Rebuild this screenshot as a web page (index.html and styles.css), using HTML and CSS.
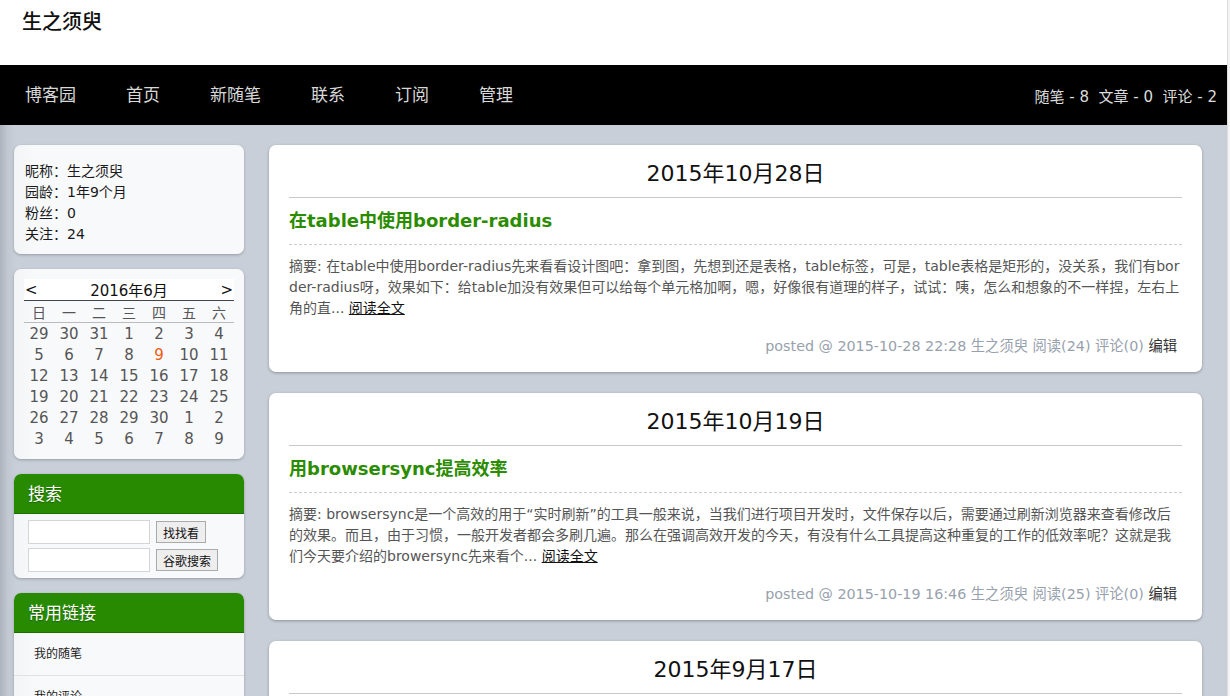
FILE: index.html
```html
<!DOCTYPE html>
<html lang="zh">
<head>
<meta charset="utf-8">
<title>生之须臾 - 博客园</title>
<link rel="stylesheet" href="styles.css">
</head>
<body>
<div class="page">
  <header class="header">
    <h1 class="site-title">生之须臾</h1>
  </header>
  <nav class="nav">
    <ul class="nav-list">
      <li><a href="#">博客园</a></li>
      <li><a href="#">首页</a></li>
      <li><a href="#">新随笔</a></li>
      <li><a href="#">联系</a></li>
      <li><a href="#">订阅</a></li>
      <li><a href="#">管理</a></li>
    </ul>
    <div class="stats">随笔 - 8&nbsp;&nbsp;文章 - 0&nbsp;&nbsp;评论 - 2</div>
  </nav>
  <div class="content">
    <aside class="sidebar">
      <section class="card profile">
        <div>昵称：生之须臾</div>
        <div>园龄：1年9个月</div>
        <div>粉丝：0</div>
        <div>关注：24</div>
      </section>
      <section class="card calendar">
        <table class="cal">
          <thead>
            <tr class="cal-title"><th>&lt;</th><th colspan="5">2016年6月</th><th class="next">&gt;</th></tr>
            <tr class="cal-week"><th>日</th><th>一</th><th>二</th><th>三</th><th>四</th><th>五</th><th>六</th></tr>
          </thead>
          <tbody>
            <tr><td>29</td><td>30</td><td>31</td><td>1</td><td>2</td><td>3</td><td>4</td></tr>
            <tr><td>5</td><td>6</td><td>7</td><td>8</td><td class="today">9</td><td>10</td><td>11</td></tr>
            <tr><td>12</td><td>13</td><td>14</td><td>15</td><td>16</td><td>17</td><td>18</td></tr>
            <tr><td>19</td><td>20</td><td>21</td><td>22</td><td>23</td><td>24</td><td>25</td></tr>
            <tr><td>26</td><td>27</td><td>28</td><td>29</td><td>30</td><td>1</td><td>2</td></tr>
            <tr><td>3</td><td>4</td><td>5</td><td>6</td><td>7</td><td>8</td><td>9</td></tr>
          </tbody>
        </table>
      </section>
      <section class="card boxed">
        <h3 class="box-title">搜索</h3>
        <div class="search">
          <div class="search-row"><input class="search-input" type="text"><button class="btn">找找看</button></div>
          <div class="search-row"><input class="search-input" type="text"><button class="btn">谷歌搜索</button></div>
        </div>
      </section>
      <section class="card boxed">
        <h3 class="box-title">常用链接</h3>
        <ul class="links">
          <li><a href="#">我的随笔</a></li>
          <li><a href="#">我的评论</a></li>
          <li><a href="#">我的参与</a></li>
        </ul>
      </section>
    </aside>
    <main class="main">
      <article class="post">
        <div class="post-date">2015年10月28日</div>
        <h2 class="post-title"><a href="#">在table中使用border-radius</a></h2>
        <div class="post-summary">摘要: 在table中使用border-radius先来看看设计图吧：拿到图，先想到还是表格，table标签，可是，table表格是矩形的，没关系，我们有border-radius呀，效果如下：给table加没有效果但可以给每个单元格加啊，嗯，好像很有道理的样子，试试：咦，怎么和想象的不一样捏，左右上角的直... <a class="more" href="#">阅读全文</a></div>
        <div class="post-foot">posted @ 2015-10-28 22:28 生之须臾 阅读(24) 评论(0) <a class="edit" href="#">编辑</a></div>
      </article>
      <article class="post">
        <div class="post-date">2015年10月19日</div>
        <h2 class="post-title"><a href="#">用browsersync提高效率</a></h2>
        <div class="post-summary">摘要: browsersync是一个高效的用于“实时刷新”的工具一般来说，当我们进行项目开发时，文件保存以后，需要通过刷新浏览器来查看修改后的效果。而且，由于习惯，一般开发者都会多刷几遍。那么在强调高效开发的今天，有没有什么工具提高这种重复的工作的低效率呢？这就是我们今天要介绍的browersync先来看个... <a class="more" href="#">阅读全文</a></div>
        <div class="post-foot">posted @ 2015-10-19 16:46 生之须臾 阅读(25) 评论(0) <a class="edit" href="#">编辑</a></div>
      </article>
      <article class="post">
        <div class="post-date">2015年9月17日</div>
        <h2 class="post-title"><a href="#">移动端开发笔记</a></h2>
        <div class="post-summary">摘要: ...</div>
      </article>
    </main>
  </div>
</div>
</body>
</html>
```

FILE: styles.css
```css
html {
  background: #f3f3f3;
}
body {
  margin: 0;
  font-family: "DejaVu Sans", "Noto Sans CJK SC", sans-serif;
  color: #222;
}
a {
  color: inherit;
  text-decoration: none;
}
.page {
  width: 1228px;
  height: 696px;
  overflow: hidden;
  border-right: 1px solid #dcdcdc;
  box-sizing: border-box;
  background: linear-gradient(to right, #adb3bc 0, #c2c8d1 8px, #c8cfd8 16px);
}
.header {
  height: 65px;
  background: #fff;
  padding: 0 22px;
  box-sizing: border-box;
}
.site-title {
  margin: 0;
  font-size: 20px;
  font-weight: 500;
  line-height: 44px;
  color: #111;
}
.nav {
  height: 60px;
  background: #000;
  display: flex;
  align-items: center;
  justify-content: space-between;
  padding-right: 10px;
}
.nav-list {
  list-style: none;
  margin: 0;
  padding: 0;
  display: flex;
}
.nav-list li a {
  display: block;
  padding: 0 25px;
  font-size: 17px;
  color: #d8d8d8;
  line-height: 60px;
}
.nav-list li:first-child a {
  padding-left: 25px;
}
.stats {
  font-size: 15px;
  color: #dcdcdc;
}
.content {
  display: flex;
  align-items: flex-start;
  gap: 25px;
  padding: 20px 0 0 14px;
}
.sidebar {
  width: 230px;
  flex: none;
  display: flex;
  flex-direction: column;
  gap: 15px;
}
.card {
  background: linear-gradient(to right, #f2f4f6, #f8f9fb 20px);
  border-radius: 7px;
  box-shadow: 0 1px 3px rgba(0, 0, 0, 0.25);
  overflow: hidden;
}
.profile {
  padding: 16px 11px 9px;
  font-size: 14px;
  line-height: 21px;
  color: #1a1a1a;
}
.calendar {
  padding: 10px 10px 10px;
}
.cal {
  border-collapse: collapse;
  width: 210px;
  table-layout: fixed;
  font-size: 15px;
  color: #555;
}
.cal th,
.cal td {
  padding: 0;
  text-align: center;
  font-weight: normal;
}
.cal-title th {
  background: #fff;
  color: #111;
  height: 21px;
  border-bottom: 1px solid #444;
  font-size: 15px;
}
.cal-title th:first-child {
  text-align: left;
  padding-left: 1px;
}
.cal-title th.next {
  text-align: right;
  padding-right: 1px;
}
.cal-week th {
  height: 21px;
  border-bottom: 1px solid #bbb;
  font-size: 14px;
  color: #555;
}
.cal td {
  height: 21px;
}
.cal td.today {
  color: #f05a12;
}
.box-title {
  margin: 0;
  height: 40px;
  line-height: 40px;
  background: #288a00;
  color: #fff;
  font-size: 17px;
  font-weight: normal;
  padding-left: 14px;
  text-shadow: 0 1px 1px rgba(0, 0, 0, 0.3);
  border-bottom: 1px solid #1d6e00;
  box-sizing: border-box;
}
.search {
  padding: 6px 14px 6px;
  display: flex;
  flex-direction: column;
  gap: 4px;
}
.search-row {
  display: flex;
  align-items: center;
  gap: 6px;
}
.search-input {
  width: 122px;
  height: 24px;
  box-sizing: border-box;
  border: 1px solid #d5d5d5;
  background: #fff;
  margin: 0;
}
.btn {
  font-family: "DejaVu Sans", "Noto Sans CJK SC", sans-serif;
  font-size: 12px;
  height: 22px;
  padding: 0 6px;
  background: #eee;
  border: 1px solid #aaa;
  color: #111;
}
.links {
  list-style: none;
  margin: 0;
  padding: 0;
}
.links li {
  border-bottom: 1px solid #e2e2e2;
}
.links li a {
  display: block;
  padding: 0 20px;
  line-height: 42px;
  font-size: 12px;
  color: #222;
}
.main {
  width: 933px;
  flex: none;
  display: flex;
  flex-direction: column;
  gap: 21px;
}
.post {
  background: #fff;
  border-radius: 7px;
  box-shadow: 0 1px 3px rgba(0, 0, 0, 0.3);
  padding: 14px 20px 16px;
}
.post-date {
  text-align: center;
  font-size: 22px;
  line-height: 30px;
  color: #111;
  padding-bottom: 8px;
  border-bottom: 1px solid #c8c8c8;
}
.post-title {
  margin: 8px 0 0;
  font-size: 18px;
  line-height: 30px;
  padding-bottom: 8px;
  border-bottom: 1px dashed #ccc;
  color: #2b8c00;
  font-weight: bold;
}
.post-summary {
  margin-top: 11px;
  font-size: 14px;
  line-height: 21px;
  color: #555;
  word-break: break-all;
}
.more {
  color: #111;
  text-decoration: underline;
}
.post-foot {
  margin-top: 17px;
  text-align: right;
  font-size: 14.3px;
  line-height: 20px;
  color: #97a1ad;
  padding-right: 5px;
}
.edit {
  color: #333;
}
```
